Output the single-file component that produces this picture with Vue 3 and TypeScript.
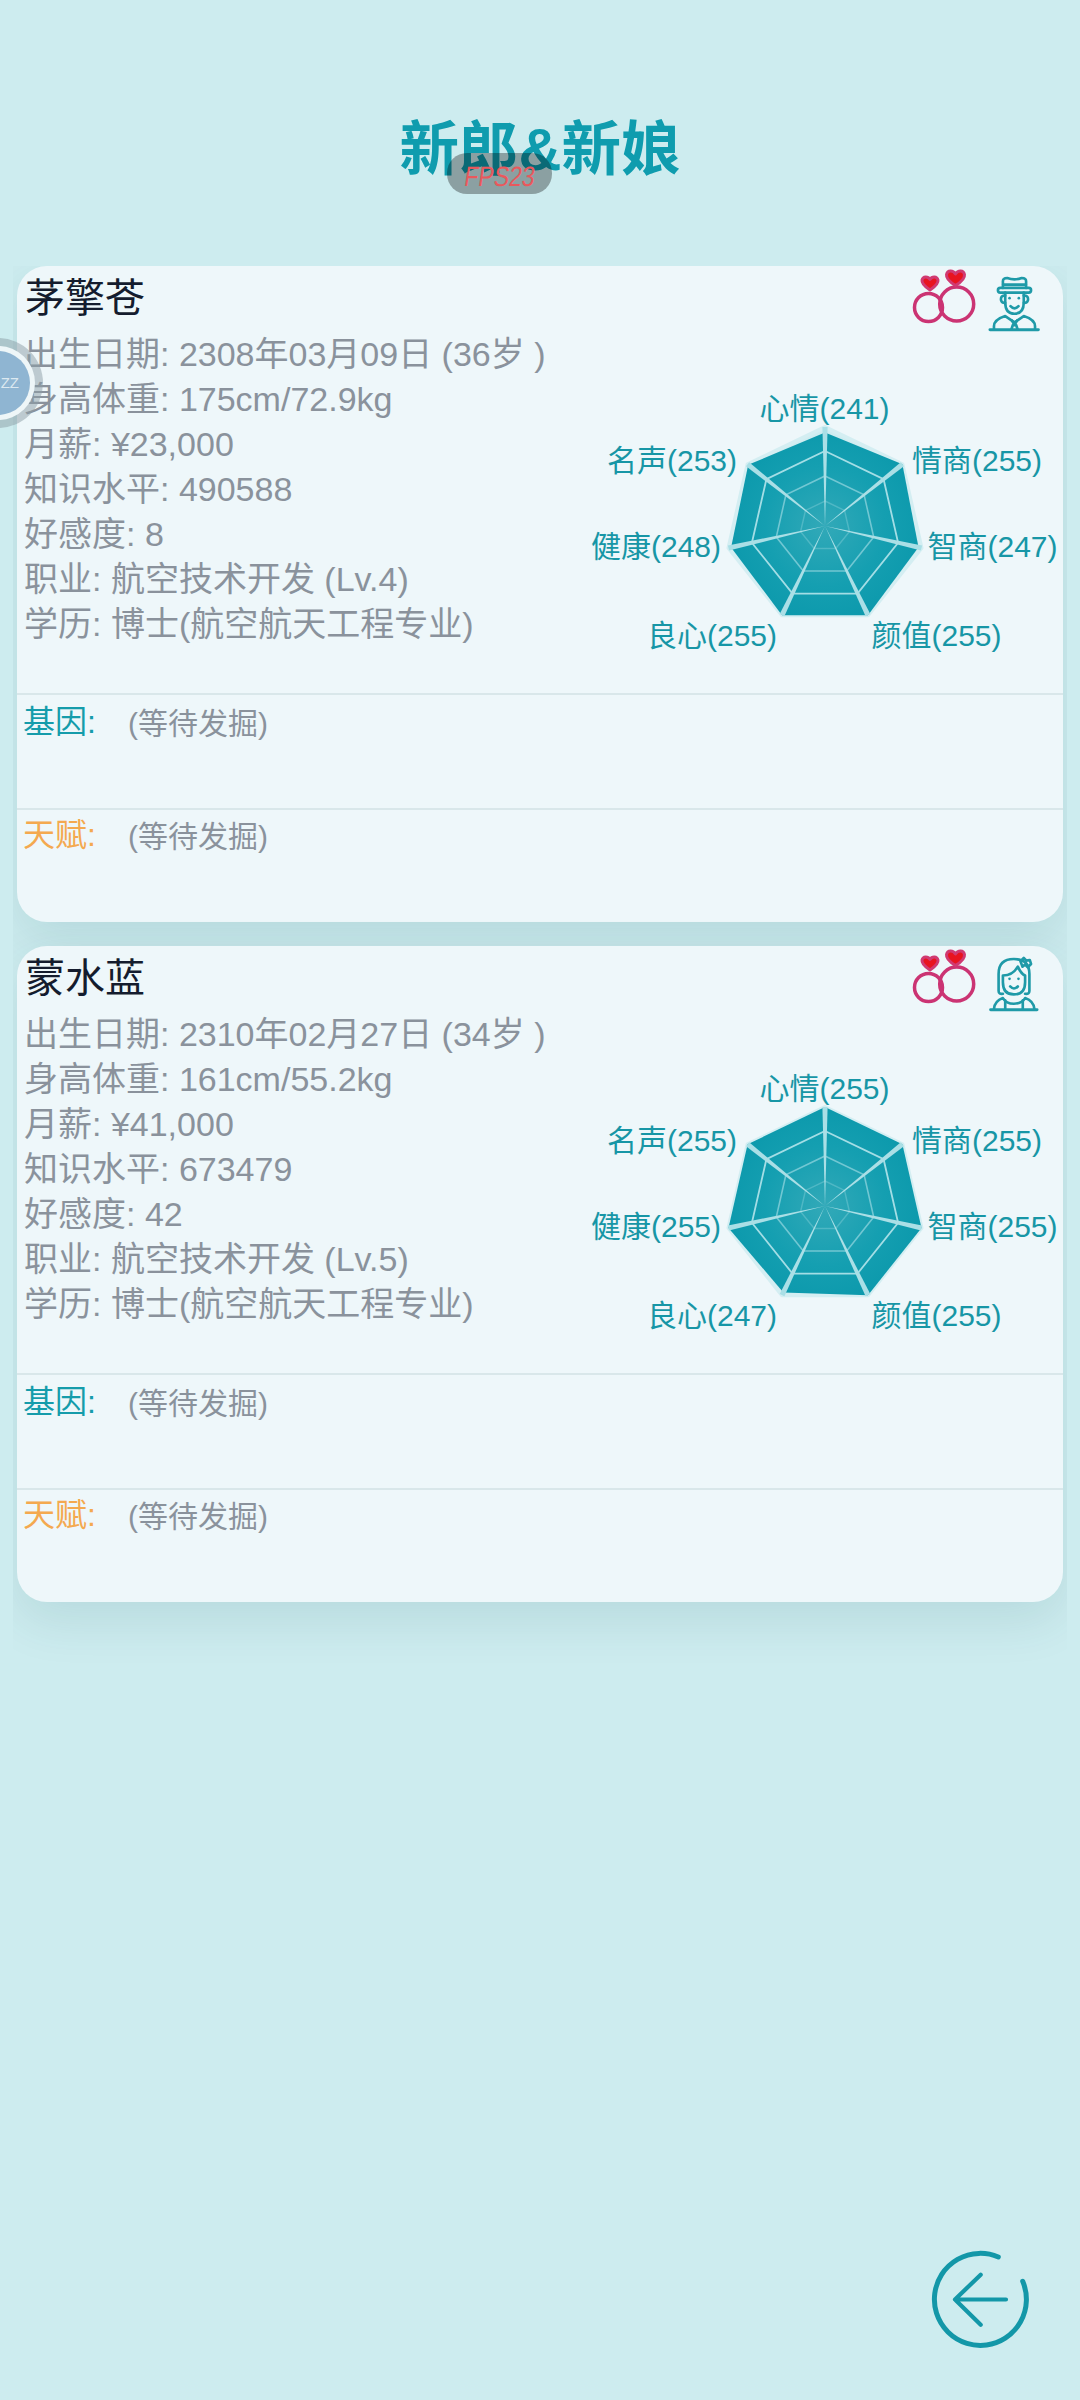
<script setup lang="ts">
interface Stat { name: string; value: number; x: number; y: number; anchor: string }
interface Person {
  name: string; kind: 'male' | 'female'; rows: string[]; values: number[]
}
const CX = 245, CY = 156, R = 99, N = 7
const labelPos = [
  { x: 244.5, y: 49, anchor: 'middle' },
  { x: 332, y: 101, anchor: 'start' },
  { x: 347.5, y: 187, anchor: 'start' },
  { x: 291.5, y: 276, anchor: 'start' },
  { x: 67, y: 276, anchor: 'start' },
  { x: 11, y: 187, anchor: 'start' },
  { x: 27, y: 101, anchor: 'start' }
]
const statNames = ['心情', '情商', '智商', '颜值', '良心', '健康', '名声']

function pt(i: number, r: number): [number, number] {
  const a = -Math.PI / 2 + (i * 2 * Math.PI) / N
  return [CX + r * Math.cos(a), CY + r * Math.sin(a)]
}
function poly(radii: (i: number) => number): string {
  return Array.from({ length: N }, (_, i) => pt(i, radii(i)).map(v => v.toFixed(1)).join(',')).join(' ')
}
const rings = [
  { pts: poly(() => 25), op: 0.25, w: 1.5 },
  { pts: poly(() => 50), op: 0.5, w: 1.6 },
  { pts: poly(() => 75), op: 0.8, w: 1.8 }
]
const outer = poly(() => R)
const spokes = Array.from({ length: N }, (_, i) => {
  const [x, y] = pt(i, R)
  const a = -Math.PI / 2 + (i * 2 * Math.PI) / N
  const dx = -Math.sin(a) * 2.6
  const dy = Math.cos(a) * 2.6
  return `${CX},${CY} ${(x + dx).toFixed(1)},${(y + dy).toFixed(1)} ${(x - dx).toFixed(1)},${(y - dy).toFixed(1)}`
})
function stats(values: number[]): Stat[] {
  return values.map((value, i) => ({ name: statNames[i], value, ...labelPos[i] }))
}
function area(values: number[]): string {
  return poly(i => (values[i] / 255) * R)
}
const people: Person[] = [
  {
    name: '茅擎苍', kind: 'male',
    rows: ['出生日期: 2308年03月09日 (36岁 )', '身高体重: 175cm/72.9kg', '月薪: ¥23,000', '知识水平: 490588', '好感度: 8', '职业: 航空技术开发 (Lv.4)', '学历: 博士(航空航天工程专业)'],
    values: [241, 255, 247, 255, 255, 248, 253]
  },
  {
    name: '蒙水蓝', kind: 'female',
    rows: ['出生日期: 2310年02月27日 (34岁 )', '身高体重: 161cm/55.2kg', '月薪: ¥41,000', '知识水平: 673479', '好感度: 42', '职业: 航空技术开发 (Lv.5)', '学历: 博士(航空航天工程专业)'],
    values: [255, 255, 255, 255, 247, 255, 255]
  }
]
</script>

<template>
  <div class="page">
    <h1 class="title">新郎&amp;新娘</h1>
    <div class="list">
      <section v-for="(p, idx) in people" :key="p.name" class="card">
        <div class="main">
          <div class="info">
            <div class="name">{{ p.name }}</div>
            <div v-for="r in p.rows" :key="r" class="row">{{ r }}</div>
          </div>
          <div class="icons">
            <svg class="rings" viewBox="0 0 70 66" width="70" height="66">
              <circle cx="17.500" cy="41.500" r="14" class="ring" />
              <circle cx="45.700" cy="38" r="17" class="ring" />
              <path class="heart" d="M19 24 C13 20 10.500 17 11 14 C12 10 17 10 19 13.500 C21 10 26 10 27 14 C27.500 17 25 20 19 24Z" />
              <path class="heart" d="M44.500 19.500 C38 15.500 35 12 35.500 8.500 C36.500 4 42 4 44.500 8 C47 4 52.500 4 53.500 8.500 C54 12 51 15.500 44.500 19.500Z" />
            </svg>
            <svg v-if="p.kind === 'male'" class="avatar" viewBox="320 70 160 175" width="53" height="58">
              <g class="av">
                <path d="M365 112 V92 Q365 82 378 82 Q400 90 422 82 Q435 82 435 92 V112" />
                <path d="M366 102 H434" />
                <rect x="350" y="112" width="100" height="14" rx="7" />
                <path d="M372 126 V155 Q372 190 400 190 Q428 190 428 155 V126" />
                <path d="M372 135 Q359 135 359 146 Q359 157 372 157 M428 135 Q441 135 441 146 Q441 157 428 157" />
                <path d="M388 167 Q400 180 412 167" />
                <path d="M338 236 V228 Q338 208 372 197 L400 216 L428 197 Q462 208 462 228 V236" />
                <path d="M392 210 L400 224 L408 210 M395 224 L391 236 M405 224 L409 236" />
                <path class="base" d="M326 238 H472" />
              </g>
              <circle cx="385" cy="143" r="4" class="dot" />
              <circle cx="413" cy="143" r="4" class="dot" />
            </svg>
            <svg v-else class="avatar" viewBox="320 70 160 175" width="53" height="58">
              <g class="av">
                <path d="M352 182 V130 Q352 85 398 85 Q445 85 445 130 V182 Q445 192 432 190 M352 182 Q352 192 365 190" />
                <path d="M418 92 L428 82 L436 90 L446 88 L450 100 L440 110 L432 102 L424 108 Z" />
                <path d="M365 155 V135 Q395 135 410 108 Q420 130 432 135 V155 Q432 192 398 192 Q365 192 365 155Z" />
                <path d="M387 168 Q398 180 410 168" />
                <path d="M338 236 Q340 212 365 203 Q375 220 398 220 Q422 220 432 203 Q458 212 460 236" />
                <path d="M372 210 V236 M425 210 V236" />
                <path class="base" d="M328 238 H468" />
              </g>
              <circle cx="385" cy="145" r="4" class="dot" />
              <circle cx="412" cy="145" r="4" class="dot" />
            </svg>
          </div>
          <svg class="radar" viewBox="0 0 483 300" width="483" height="300">
            <defs>
              <radialGradient :id="'fill' + idx" gradientUnits="userSpaceOnUse" :cx="CX" :cy="CY" :r="R">
                <stop offset="0" stop-color="#32a9b8" />
                <stop offset="0.6" stop-color="#159fb1" />
                <stop offset="1" stop-color="#0c99ac" />
              </radialGradient>
            </defs>
            <polygon :points="outer" class="outer" />
            <polygon :points="area(p.values)" :fill="`url(#fill${idx})`" />
            <polygon v-for="r in rings" :key="r.pts" :points="r.pts" class="grid" :stroke-opacity="r.op" :stroke-width="r.w" />
            <polygon v-for="s in spokes" :key="s" :points="s" class="spoke" />
            <text v-for="s in stats(p.values)" :key="s.name" :x="s.x" :y="s.y" :text-anchor="s.anchor" class="label">{{ s.name }}({{ s.value }})</text>
          </svg>
        </div>
        <div class="trait first">
          <span class="t-label gene">基因:</span><span class="t-value">(等待发掘)</span>
        </div>
        <div class="trait second">
          <span class="t-label talent">天赋:</span><span class="t-value">(等待发掘)</span>
        </div>
      </section>
    </div>

    <div class="fps"><span class="fps-text">FPS23</span></div>
    <div class="float"><div class="float-white"><div class="float-blue">ZZ</div></div></div>
    <svg class="back" viewBox="0 0 100 100" width="100" height="100">
      <path class="circle" d="M68.300 8 A46 46 0 1 0 92.700 32.300" />
      <path d="M76 50.500 H25 M50.700 25.700 L25 50.500 L50.700 75.700" />
    </svg>
  </div>
</template>

<style scoped>
.page {
  position: relative;
  width: 1080px;
  height: 2400px;
  overflow: hidden;
  background: #cdecef;
  font-family: "Liberation Sans", "Noto Sans CJK SC", sans-serif;
}
.title {
  margin: 0;
  height: 266px;
  padding-top: 111px;
  box-sizing: border-box;
  text-align: center;
  font-size: 59.5px;
  line-height: 78px;
  font-weight: 700;
  color: #0f9cae;
}
.list {
  margin: 0 13px;
  padding: 0 4px 98px;
  height: 1434px;
  box-sizing: border-box;
  overflow: hidden;
  display: flex;
  flex-direction: column;
  gap: 24px;
}
.card {
  flex: none;
  height: 656px;
  box-sizing: border-box;
  background: #eef7fa;
  border-radius: 30px;
  box-shadow: 0 18px 50px rgba(0, 70, 80, 0.11);
  display: flex;
  flex-direction: column;
  overflow: hidden;
}
.main {
  position: relative;
  height: 427px;
  flex: none;
}
.info {
  padding-left: 7px;
}
.name {
  height: 66px;
  padding-left: 1px;
  font-size: 40px;
  line-height: 64px;
  color: #141c2e;
}
.row {
  font-size: 34px;
  line-height: 45px;
  height: 45px;
  color: #8a929c;
  white-space: nowrap;
}
.icons {
  position: absolute;
  right: 22px;
  top: 0;
  display: flex;
  align-items: flex-start;
}
.rings {
  margin-right: 7px;
}
.avatar {
  margin-top: 8px;
}
.ring {
  fill: none;
  stroke: #cb3473;
  stroke-width: 3.500;
}
.heart {
  fill: #e8141f;
  stroke: #d03a72;
  stroke-width: 3;
  stroke-linejoin: round;
}
.av {
  fill: none;
  stroke: #1f9aa8;
  stroke-width: 8;
  stroke-linecap: round;
  stroke-linejoin: round;
}
.base {
  stroke-width: 9;
}
.dot {
  fill: #1f9aa8;
}
.radar {
  position: absolute;
  left: 563px;
  top: 104px;
}
.outer {
  fill: #cfecf0;
  stroke: #d4eef2;
  stroke-width: 4;
  stroke-linejoin: round;
}
.grid {
  fill: none;
  stroke: #c8eef3;
}
.spoke {
  fill: #aadfe6;
}
.label {
  font-size: 30px;
  fill: #1796a6;
  font-family: "Liberation Sans", "Noto Sans CJK SC", sans-serif;
}
.trait {
  box-sizing: border-box;
  border-top: 2px solid #d9e7ea;
  padding-left: 6px;
  display: flex;
  align-items: flex-start;
  line-height: 44px;
}
.first {
  height: 115px;
  padding-top: 5px;
}
.second {
  height: 114px;
  padding-top: 3px;
}
.t-label {
  width: 105px;
  flex: none;
  font-size: 32px;
}
.gene {
  color: #159cab;
}
.talent {
  color: #f4a94f;
}
.t-value {
  font-size: 30px;
  color: #8a929c;
  margin-top: 2px;
}
.fps {
  position: absolute;
  left: 447px;
  top: 153px;
  width: 105px;
  height: 41px;
  border-radius: 20px;
  background: rgba(0, 0, 0, 0.32);
  color: #e9585c;
  font-size: 28px;
  line-height: 47px;
  text-align: center;
}
.fps-text {
  display: inline-block;
  transform: scaleX(0.82) skewX(-10deg);
}
.float {
  position: absolute;
  left: -47px;
  top: 338px;
  width: 90px;
  height: 90px;
  border-radius: 50%;
  background: rgba(140, 158, 165, 0.5);
  display: flex;
  align-items: center;
  justify-content: center;
}
.float-white {
  width: 74px;
  height: 74px;
  border-radius: 50%;
  background: #eef6f8;
  display: flex;
  align-items: center;
  justify-content: center;
}
.float-blue {
  width: 64px;
  height: 64px;
  border-radius: 50%;
  background: #8fb5d2;
  color: #dbe8f0;
  font-size: 15px;
  line-height: 64px;
  text-align: right;
  padding-right: 11px;
  box-sizing: border-box;
}
.back {
  position: absolute;
  left: 930px;
  top: 2249px;
  fill: none;
  stroke: #1397a8;
  stroke-width: 4.200;
  stroke-linecap: round;
  stroke-linejoin: round;
}
.circle {
  stroke-width: 5;
}
</style>
